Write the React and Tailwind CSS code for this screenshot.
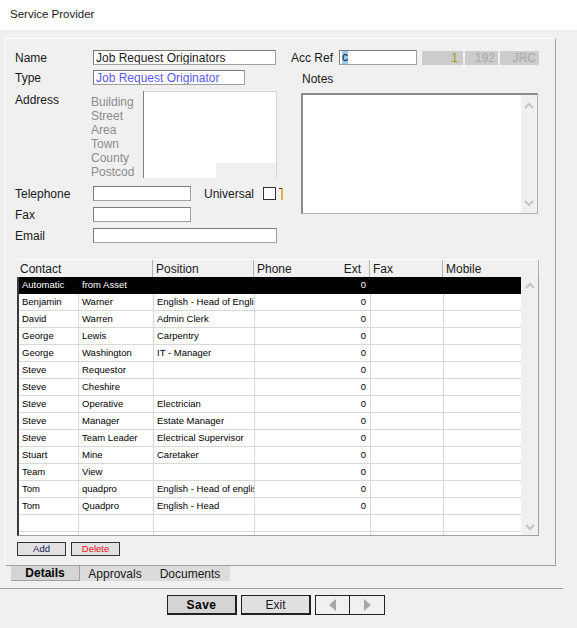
import React from "react";

const rows = [
  ["Automatic", "from Asset", ""],
  ["Benjamin", "Warner", "English - Head of English"],
  ["David", "Warren", "Admin Clerk"],
  ["George", "Lewis", "Carpentry"],
  ["George", "Washington", "IT - Manager"],
  ["Steve", "Requestor", ""],
  ["Steve", "Cheshire", ""],
  ["Steve", "Operative", "Electrician"],
  ["Steve", "Manager", "Estate Manager"],
  ["Steve", "Team Leader", "Electrical Supervisor"],
  ["Stuart", "Mine", "Caretaker"],
  ["Team", "View", ""],
  ["Tom", "quadpro", "English - Head of english"],
  ["Tom", "Quadpro", "English - Head"],
];

const Chevron = ({ up }) => (
  <svg width="10" height="7" viewBox="0 0 10 7">
    <polyline
      points={up ? "1,6 5,2 9,6" : "1,1 5,5 9,1"}
      fill="none"
      stroke="#c4c4c4"
      strokeWidth="2"
    />
  </svg>
);

const Input = ({ className, children }) => (
  <div
    className={`shrink-0 h-[15px] bg-white border border-[#a0a0a0] border-t-[#7a7a7a] border-l-[#7a7a7a] flex items-center pl-[2px] text-[12px] leading-none overflow-hidden whitespace-nowrap ${className}`}
  >
    {children}
  </div>
);

const Label = ({ className, children }) => (
  <div className={`shrink-0 text-[12px] text-[#1a1a1a] leading-none ${className}`}>{children}</div>
);

function Grid() {
  return (
    <div className="ml-[11px] mt-[16px] w-[522px]">
      <div className="flex h-[18px] bg-[#f0f0f0] border-t border-white text-[12px] leading-none text-[#1a1a1a]">
        <div className="w-[136px] border-r border-[#b0b0b0] pl-[3px] flex items-center">Contact</div>
        <div className="w-[101px] border-r border-[#b0b0b0] pl-[3px] flex items-center">Position</div>
        <div className="w-[116px] border-r border-[#b0b0b0] pl-[3px] pr-[8px] flex items-center justify-between">
          <span>Phone</span>
          <span>Ext</span>
        </div>
        <div className="w-[73px] border-r border-[#b0b0b0] pl-[3px] flex items-center">Fax</div>
        <div className="w-[96px] border-r border-[#b0b0b0] pl-[3px] flex items-center">Mobile</div>
      </div>
      <div className="flex h-[259px] border-l-2 border-l-[#3a3a3a] border-b border-r border-[#a0a0a0] overflow-hidden">
        <div className="w-[502px] bg-white">
          {rows.map((r, i) => {
            const sel = i === 0;
            return (
              <div
                key={i}
                className={`flex h-[17px] border-b text-[9.5px] leading-none ${
                  sel ? "bg-black text-white border-black" : "text-black border-[#d8d8d8]"
                }`}
              >
                <div className={`w-[60px] pl-[3px] flex items-center overflow-hidden whitespace-nowrap border-r ${sel ? "border-black" : "border-[#d8d8d8]"}`}>{r[0]}</div>
                <div className={`w-[75px] pl-[3px] flex items-center overflow-hidden whitespace-nowrap border-r ${sel ? "border-black" : "border-[#d8d8d8]"}`}>{r[1]}</div>
                <div className={`w-[101px] pl-[3px] flex items-center overflow-hidden whitespace-nowrap border-r ${sel ? "border-black" : "border-[#d8d8d8]"}`}>{r[2]}</div>
                <div className={`w-[116px] pr-[4px] flex items-center justify-end border-r ${sel ? "border-black" : "border-[#d8d8d8]"}`}>0</div>
                <div className={`w-[73px] border-r ${sel ? "border-black" : "border-[#d8d8d8]"}`}></div>
                <div className="w-[77px]"></div>
              </div>
            );
          })}
          {[0, 1].map((k) => (
            <div key={k} className="flex h-[17px] border-b border-[#d8d8d8]">
              <div className="w-[60px] border-r border-[#d8d8d8]"></div>
              <div className="w-[75px] border-r border-[#d8d8d8]"></div>
              <div className="w-[101px] border-r border-[#d8d8d8]"></div>
              <div className="w-[116px] border-r border-[#d8d8d8]"></div>
              <div className="w-[73px] border-r border-[#d8d8d8]"></div>
              <div className="w-[77px]"></div>
            </div>
          ))}
        </div>
        <div className="w-[18px] bg-[#f0f0f0] flex flex-col items-center justify-between pt-[5px] pb-[4px]">
          <Chevron up />
          <Chevron />
        </div>
      </div>
    </div>
  );
}

export default function App() {
  return (
    <div className="w-[577px] h-[628px] bg-[#f0f0f0] font-['Liberation_Sans',Arial,sans-serif] text-[#1a1a1a] overflow-hidden">
      <div className="h-[30px] bg-white pl-[10px] flex items-center text-[11.5px]">Service Provider</div>

      <div className="ml-[5px] mt-[8px] w-[551px] h-[528px] border-t border-l border-white border-r border-b border-r-[#a0a0a0] border-b-[#a0a0a0]">
        <div className="flex mt-[11px]">
          {/* left column */}
          <div className="ml-[9px] w-[262px] shrink-0">
            <div className="flex items-center h-[15px]">
              <Label className="w-[78px]">Name</Label>
              <Input className="w-[183px]">Job Request Originators</Input>
            </div>
            <div className="flex items-center h-[15px] mt-[5px]">
              <Label className="w-[78px]">Type</Label>
              <Input className="w-[152px] text-[#5a5af0]">Job Request Originator</Input>
            </div>
            <div className="flex mt-[6px] h-[87px]">
              <Label className="w-[76px] pt-[3px]">Address</Label>
              <div className="w-[52px] pt-[4px] text-[12px] leading-[14px] text-[#8c8c8c] whitespace-nowrap">
                <div>Building</div>
                <div>Street</div>
                <div>Area</div>
                <div>Town</div>
                <div>County</div>
                <div>Postcod</div>
              </div>
              <div className="w-[134px] h-[87px] border-l border-[#808080] flex flex-col">
                <div className="flex-1 bg-white border-t border-r border-[#d4d4d4]"></div>
                <div className="flex h-[15px]">
                  <div className="w-[72px] bg-white"></div>
                  <div className="flex-1 border-r border-[#d4d4d4]"></div>
                </div>
              </div>
            </div>
            <div className="flex items-center h-[15px] mt-[8px]">
              <Label className="w-[78px]">Telephone</Label>
              <Input className="w-[98px]"></Input>
              <Label className="ml-[13px] w-[59px]">Universal</Label>
              <div className="shrink-0 w-[13px] h-[13px] bg-white border border-[#333]"></div>
              <div className="shrink-0 ml-[3px] w-[4px] h-[12px] border-t border-[#333] border-r-2 border-r-[#f0b040]"></div>
            </div>
            <div className="flex items-center h-[15px] mt-[6px]">
              <Label className="w-[78px]">Fax</Label>
              <Input className="w-[98px]"></Input>
            </div>
            <div className="flex items-center h-[15px] mt-[6px]">
              <Label className="w-[78px]">Email</Label>
              <Input className="w-[184px]"></Input>
            </div>
          </div>

          {/* right column */}
          <div className="ml-[14px] w-[248px]">
            <div className="flex items-center h-[15px]">
              <Label className="w-[48px]">Acc Ref</Label>
              <Input className="w-[78px]">
                <span className="bg-[#99c9ef] leading-[13px]">c</span>
              </Input>
              <div className="ml-[5px] w-[41px] h-[14px] bg-[#cccccc] text-[12px] leading-none flex items-center justify-end pr-[5px] text-[#a09a00]">1</div>
              <div className="ml-[2px] w-[33px] h-[14px] bg-[#cccccc] text-[12px] leading-none flex items-center justify-end pr-[3px] text-[#a8a8a8]">192</div>
              <div className="ml-[2px] w-[39px] h-[14px] bg-[#cccccc] text-[12px] leading-none flex items-center justify-end pr-[3px] text-[#a8a8a8]">JRC</div>
            </div>
            <Label className="ml-[11px] mt-[8px]">Notes</Label>
            <div className="ml-[10px] mt-[8px] w-[237px] h-[121px] bg-white border-t-2 border-l-2 border-[#8a8a8a] border-r border-b border-r-[#b0b0b0] border-b-[#b0b0b0] flex justify-end">
              <div className="w-[16px] h-full bg-[#f0f0f0] flex flex-col items-center justify-between pt-[7px] pb-[6px]">
                <Chevron up />
                <Chevron />
              </div>
            </div>
          </div>
        </div>

        <Grid />

        <div className="flex ml-[11px] mt-[6px] gap-[5px]">
          <div className="w-[49px] h-[14px] bg-[#e1e1e1] border border-[#333] flex items-center justify-center text-[9.5px] leading-none text-[#1a1a60]">Add</div>
          <div className="w-[49px] h-[14px] bg-[#e1e1e1] border border-[#333] flex items-center justify-center text-[9.5px] leading-none text-[#f01010]">Delete</div>
        </div>
      </div>

      <div className="flex ml-[11px] h-[15px] text-[12px] leading-none">
        <div className="w-[69px] bg-[#d4d4d4] border-b border-r border-[#a0a0a0] flex items-center justify-center font-bold text-black">Details</div>
        <div className="w-[70px] bg-[#dcdcdc] flex items-center justify-center">Approvals</div>
        <div className="w-[80px] bg-[#dcdcdc] flex items-center justify-center">Documents</div>
      </div>

      <div className="mt-[7px] w-[563px] h-px bg-[#a0a0a0]"></div>

      <div className="flex ml-[167px] mt-[6px] h-[20px] text-[12px] leading-none">
        <div className="w-[70px] bg-[#d4d4d4] border border-[#222] border-b-2 border-r-2 flex items-center justify-center font-bold tracking-[0.5px] text-black">Save</div>
        <div className="ml-[4px] w-[70px] bg-[#e0e0e0] border border-[#222] border-b-2 border-r-2 flex items-center justify-center">Exit</div>
        <div className="ml-[4px] w-[70px] border border-[#222] flex">
          <div className="w-[34px] border-r border-[#222] flex items-center justify-center">
            <svg width="7" height="12" viewBox="0 0 7 12"><polygon points="7,0 0,6 7,12" fill="#a8a8a8" /></svg>
          </div>
          <div className="flex-1 flex items-center justify-center">
            <svg width="7" height="12" viewBox="0 0 7 12"><polygon points="0,0 7,6 0,12" fill="#a8a8a8" /></svg>
          </div>
        </div>
      </div>
    </div>
  );
}
